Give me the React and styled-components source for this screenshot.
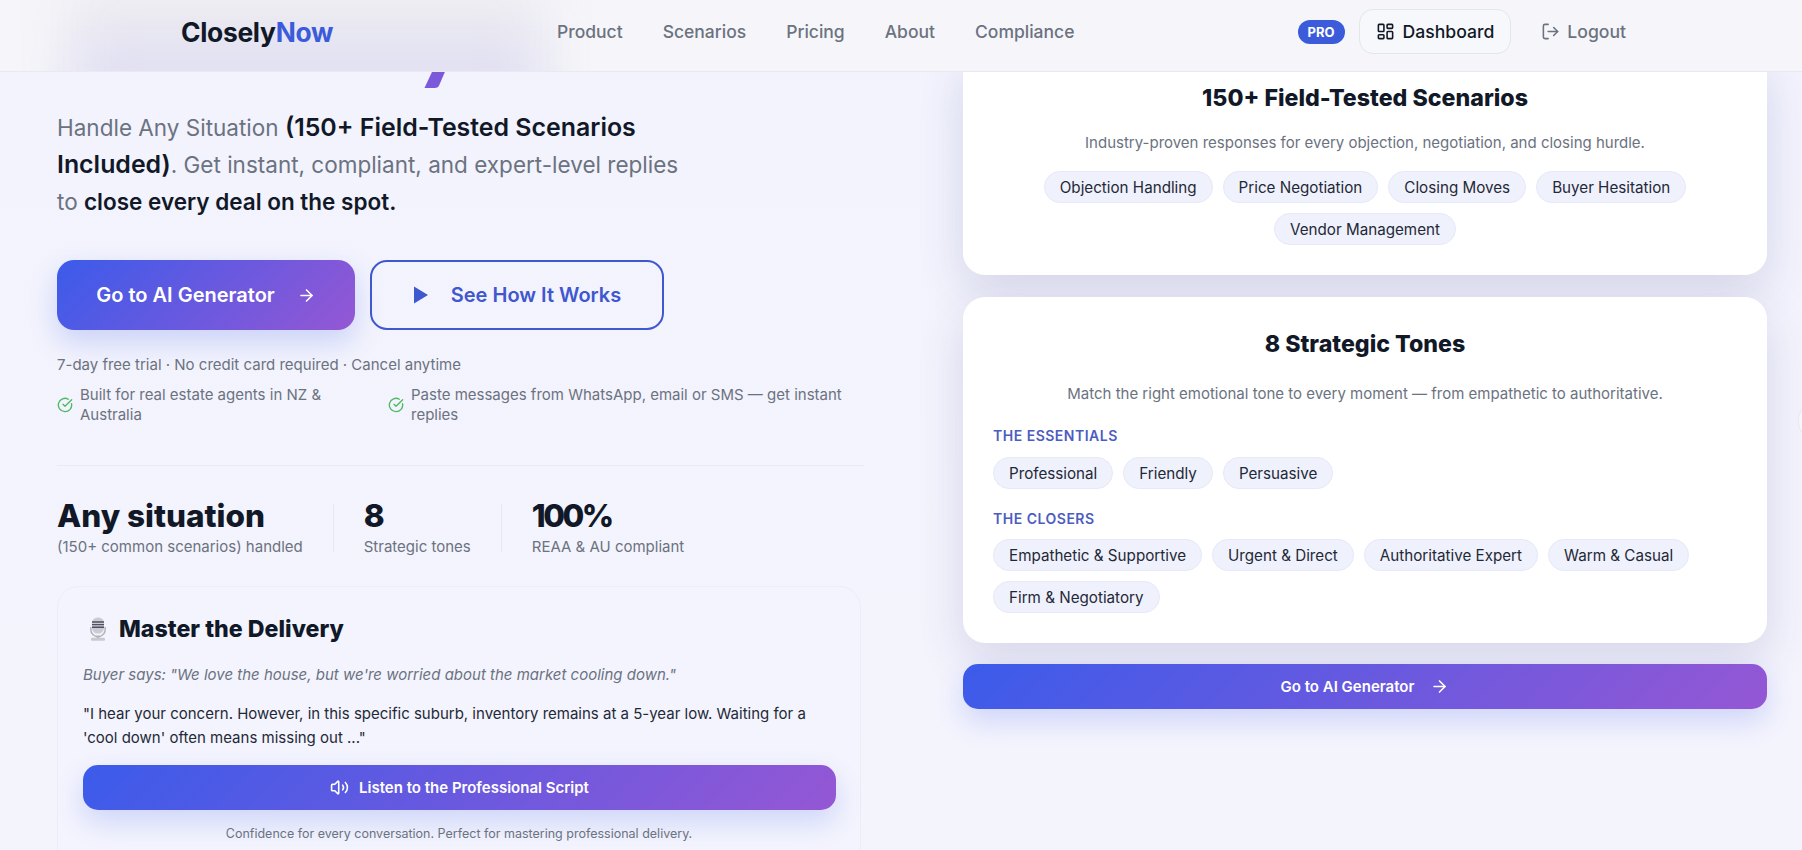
import React from 'react';
import styled, { createGlobalStyle } from 'styled-components';
import { ArrowRight, LayoutDashboard, LogOut, Volume2, CircleCheckBig } from 'lucide-react';

const GlobalStyle = createGlobalStyle`
  html, body {
    margin: 0;
    height: 850px;
    overflow: hidden;
    background: #f3f4fd;
    font-family: Inter, "Liberation Sans", sans-serif;
    color: #111827;
  }
  * { box-sizing: border-box; }
`;

const gradient = 'linear-gradient(135deg, #3b5bea 0%, #9557d4 100%)';
const headingFont = 'Inter, "Noto Sans", sans-serif';

const Page = styled.div`
  position: relative;
  width: 1802px;
  height: 850px;
  overflow: hidden;
  background: linear-gradient(180deg, #f2f3fd 0%, #f4f4fd 100%);
`;

const Nav = styled.header`
  position: absolute;
  top: 0;
  left: 0;
  right: 0;
  z-index: 10;
  isolation: isolate;
  overflow: hidden;
  height: 72px;
  display: flex;
  align-items: center;
  padding: 0 176px 8px 181px;
  background: #f6f6fa;
  border-bottom: 1px solid #e8e9f1;
`;

// the page heading smeared behind the frosted bar
const NavGlow = styled.div`
  position: absolute;
  z-index: -1;
  left: 66px;
  top: -30px;
  width: 480px;
  height: 160px;
  background: linear-gradient(180deg, #eeeef1 20%, #e2e0f2 55%);
  filter: blur(26px);
`;

const Logo = styled.div`
  font-size: 26.4px;
  font-weight: 700;
  letter-spacing: -0.3px;
  color: #111827;
  width: 376px;
  & span { color: #3b5bdb; }
`;

const NavLinks = styled.nav`
  display: flex;
  gap: 40px;
  flex: 1;
`;

const NavLink = styled.a`
  font-size: 17.5px;
  font-weight: 500;
  color: #6b7280;
`;

const NavRight = styled.div`
  display: flex;
  align-items: center;
`;

const ProBadge = styled.span`
  background: #3b5bdb;
  color: #fff;
  font-size: 13px;
  font-weight: 700;
  padding: 4px 10px;
  border-radius: 999px;
  line-height: 16px;
`;

const DashButton = styled.button`
  display: flex;
  align-items: center;
  gap: 8px;
  height: 45px;
  margin-left: 14px;
  padding: 0 16px;
  border: 1px solid #e4e6ee;
  border-radius: 14px;
  background: #f7f8fb;
  font: 500 17.6px Inter, sans-serif;
  color: #111827;
`;

const LogoutLink = styled.a`
  display: flex;
  align-items: center;
  gap: 7px;
  margin-left: 30px;
  font-size: 17.6px;
  font-weight: 500;
  color: #6b7280;
`;

const Layout = styled.main`
  display: grid;
  grid-template-columns: 807px 804px;
  column-gap: 99px;
  padding-left: 57px;
  margin-top: -54px;
`;

const HeroColumn = styled.section`
  display: flex;
  flex-direction: column;
`;

const HeroTitle = styled.h1`
  margin: 0 0 21px;
  height: 142px;
  padding-top: 31px;
  overflow: hidden;
  font-family: Lato, ${headingFont};
  font-size: 100px;
  line-height: 110px;
  font-weight: 900;
  text-indent: 16px;
  white-space: nowrap;
  background: linear-gradient(90deg, #3b5bea, #8f58d6);
  -webkit-background-clip: text;
  background-clip: text;
  color: transparent;
  width: 494px;
`;

const Lead = styled.p`
  margin: 0 0 40px;
  max-width: 640px;
  font-size: 22.5px;
  line-height: 37px;
  color: #6b7280;
  & strong { color: #111827; font-weight: 600; }
  & strong.big { font-size: 24.9px; }
`;

const HeroActions = styled.div`
  display: flex;
  gap: 15px;
`;

const PrimaryButton = styled.button`
  display: flex;
  align-items: center;
  justify-content: center;
  gap: 22px;
  width: 298px;
  height: 70px;
  border: 0;
  border-radius: 17px;
  background: ${gradient};
  color: #fff;
  font: 600 20px Inter, sans-serif;
  box-shadow: 0 12px 28px rgba(59, 91, 234, 0.22);
`;

const SecondaryButton = styled.button`
  display: flex;
  align-items: center;
  justify-content: center;
  gap: 22px;
  width: 294px;
  height: 70px;
  border: 2px solid #3f57cf;
  border-radius: 17px;
  background: transparent;
  color: #3f57cf;
  font: 600 20px Inter, sans-serif;
`;

const TrialNote = styled.p`
  margin: 25px 0 0;
  font-size: 15px;
  line-height: 20px;
  color: #6b7280;
`;

const Checks = styled.div`
  display: grid;
  grid-template-columns: 331px 1fr;
  margin-top: 10px;
`;

const CheckItem = styled.div`
  display: flex;
  align-items: center;
  gap: 7px;
  font-size: 15px;
  line-height: 20px;
  color: #6b7280;
  max-width: ${(p) => p.$max}px;
  & svg { flex: none; color: #4cb963; }
`;

const Stats = styled.div`
  display: flex;
  margin-top: 40px;
  padding-top: 38px;
  border-top: 1px solid #e9eaf3;
`;

const Stat = styled.div`
  padding-right: 30px;
  margin-right: 30px;
  border-right: ${(p) => (p.$last ? '0' : '1px solid #e6e7f0')};
  height: 48px;
`;

const StatValue = styled.div`
  font-family: ${headingFont};
  font-size: 31.5px;
  line-height: 40px;
  font-weight: 800;
  margin-top: -8px;
  letter-spacing: ${(p) => (p.$tight ? '-2.5px' : '0')};
`;

const StatLabel = styled.div`
  font-size: 15px;
  line-height: 20px;
  color: #6b7280;
  margin-top: 1px;
`;

const DemoCard = styled.section`
  margin-top: 34px;
  width: 804px;
  height: 320px;
  padding: 27px 25px;
  border: 1px solid #ecedf6;
  border-radius: 22px;
  background: #f3f4fd;
`;

const DemoTitle = styled.h3`
  display: flex;
  align-items: center;
  gap: 10px;
  margin: 0 0 0 4px;
  font-family: ${headingFont};
  font-size: 23.2px;
  line-height: 30px;
  font-weight: 800;
`;

const BuyerLine = styled.p`
  margin: 19px 0 0;
  font-size: 15px;
  font-style: italic;
  line-height: 24px;
  color: #6b7280;
`;

const ScriptLine = styled.p`
  margin: 15px 0 0;
  font-size: 15px;
  line-height: 24px;
  color: #1f2937;
`;

const WideButton = styled.button`
  display: flex;
  align-items: center;
  justify-content: center;
  gap: ${(p) => p.$gap}px;
  width: ${(p) => p.$width}px;
  height: 45px;
  border: 0;
  border-radius: 15px;
  background: ${gradient};
  color: #fff;
  font: 600 15px Inter, sans-serif;
  box-shadow: 0 12px 28px rgba(59, 91, 234, 0.2);
`;

const DemoButton = styled(WideButton)`
  margin-top: 15px;
`;

const Caption = styled.p`
  margin: 16px 0 0;
  text-align: center;
  font-size: 12.5px;
  line-height: 16px;
  color: #6b7280;
`;

const SideColumn = styled.section`
  display: flex;
  flex-direction: column;
  gap: 21px;
  margin-top: 105px;
  & > article + article { margin-top: 1px; }
`;

const Card = styled.article`
  padding: 30px;
  background: #fff;
  border-radius: 22px;
  box-shadow: 0 18px 46px rgba(60, 60, 130, 0.16);
`;

const CardTitle = styled.h2`
  margin: 0;
  text-align: center;
  font-family: ${headingFont};
  font-size: 23.2px;
  line-height: 34px;
  font-weight: 800;
`;

const CardText = styled.p`
  margin: ${(p) => p.$top}px 0 0;
  text-align: center;
  font-size: 15px;
  line-height: 22px;
  color: #6b7280;
`;

const ChipRow = styled.div`
  display: flex;
  flex-wrap: wrap;
  gap: 10px;
  justify-content: ${(p) => (p.$center ? 'center' : 'flex-start')};
  margin-top: ${(p) => p.$top}px;
`;

const Chip = styled.span`
  height: 32px;
  padding: 0 15px;
  display: flex;
  align-items: center;
  border: 1px solid #e6e9f8;
  border-radius: 999px;
  background: #eff1fc;
  font-size: 15.2px;
  color: #1f2937;
`;

const GroupLabel = styled.div`
  margin-top: ${(p) => p.$top}px;
  font-size: 14px;
  line-height: 18px;
  font-weight: 600;
  letter-spacing: 0.5px;
  color: #4c5dc0;
`;

const EdgeButton = styled.div`
  position: absolute;
  right: -26px;
  top: 403px;
  width: 30px;
  height: 36px;
  border-radius: 50%;
  background: #f7f7fb;
  border: 1px solid #e8e8f0;
`;

function PlayIcon() {
  return (
    <svg width="16" height="18" viewBox="0 0 16 18">
      <path d="M1 0.5 L15 9 L1 17.5 Z" fill="currentColor" />
    </svg>
  );
}

function MicEmoji() {
  return (
    <svg width="22" height="24" viewBox="0 0 22 24">
      <rect x="5" y="0.5" width="12" height="16" rx="5.5" fill="#cbcbd4" />
      <path d="M5 5h12M5 7.6h12M5 10.2h12" stroke="#4f4f66" strokeWidth="1.4" />
      <path d="M3.8 10v2.5a7.2 7.2 0 0 0 14.4 0v-2.5" fill="none" stroke="#b4b4bd" strokeWidth="1.5" />
      <rect x="9.5" y="18.5" width="3" height="3" fill="#b4b4bd" />
      <rect x="4" y="20.8" width="14" height="3" rx="1" fill="#c9c9d2" />
    </svg>
  );
}

const scenarios = ['Objection Handling', 'Price Negotiation', 'Closing Moves', 'Buyer Hesitation', 'Vendor Management'];
const essentials = ['Professional', 'Friendly', 'Persuasive'];
const closers = ['Empathetic & Supportive', 'Urgent & Direct', 'Authoritative Expert', 'Warm & Casual', 'Firm & Negotiatory'];

export default function App() {
  return (
    <Page>
      <GlobalStyle />
      <Nav>
        <NavGlow />
        <Logo>Closely<span>Now</span></Logo>
        <NavLinks>
          {['Product', 'Scenarios', 'Pricing', 'About', 'Compliance'].map((l) => (
            <NavLink key={l}>{l}</NavLink>
          ))}
        </NavLinks>
        <NavRight>
          <ProBadge>PRO</ProBadge>
          <DashButton><LayoutDashboard size={19} />Dashboard</DashButton>
          <LogoutLink><LogOut size={19} />Logout</LogoutLink>
        </NavRight>
      </Nav>
      <Layout>
        <HeroColumn>
          <HeroTitle>So Easily</HeroTitle>
          <Lead>
            Handle Any Situation <strong className="big">(150+ Field-Tested Scenarios Included)</strong>. Get instant, compliant, and expert-level replies to <strong>close every deal on the spot.</strong>
          </Lead>
          <HeroActions>
            <PrimaryButton>Go to AI Generator <ArrowRight size={19} /></PrimaryButton>
            <SecondaryButton><PlayIcon />See How It Works</SecondaryButton>
          </HeroActions>
          <TrialNote>7-day free trial · No credit card required · Cancel anytime</TrialNote>
          <Checks>
            <CheckItem $max={300}><CircleCheckBig size={16} />Built for real estate agents in NZ & Australia</CheckItem>
            <CheckItem $max={470}><CircleCheckBig size={16} />Paste messages from WhatsApp, email or SMS — get instant replies</CheckItem>
          </Checks>
          <Stats>
            <Stat>
              <StatValue>Any situation</StatValue>
              <StatLabel>(150+ common scenarios) handled</StatLabel>
            </Stat>
            <Stat>
              <StatValue>8</StatValue>
              <StatLabel>Strategic tones</StatLabel>
            </Stat>
            <Stat $last>
              <StatValue $tight>100%</StatValue>
              <StatLabel>REAA & AU compliant</StatLabel>
            </Stat>
          </Stats>
          <DemoCard>
            <DemoTitle><MicEmoji />Master the Delivery</DemoTitle>
            <BuyerLine>Buyer says: "We love the house, but we're worried about the market cooling down."</BuyerLine>
            <ScriptLine>"I hear your concern. However, in this specific suburb, inventory remains at a 5-year low. Waiting for a 'cool down' often means missing out ..."</ScriptLine>
            <DemoButton $width={753} $gap={10}><Volume2 size={19} />Listen to the Professional Script</DemoButton>
            <Caption>Confidence for every conversation. Perfect for mastering professional delivery.</Caption>
          </DemoCard>
        </HeroColumn>
        <SideColumn>
          <Card>
            <CardTitle>150+ Field-Tested Scenarios</CardTitle>
            <CardText $top={17}>Industry-proven responses for every objection, negotiation, and closing hurdle.</CardText>
            <ChipRow $center $top={17}>
              {scenarios.map((s) => <Chip key={s}>{s}</Chip>)}
            </ChipRow>
          </Card>
          <Card>
            <CardTitle>8 Strategic Tones</CardTitle>
            <CardText $top={22}>Match the right emotional tone to every moment — from empathetic to authoritative.</CardText>
            <GroupLabel $top={22}>THE ESSENTIALS</GroupLabel>
            <ChipRow $top={12}>
              {essentials.map((s) => <Chip key={s}>{s}</Chip>)}
            </ChipRow>
            <GroupLabel $top={21}>THE CLOSERS</GroupLabel>
            <ChipRow $top={11}>
              {closers.map((s) => <Chip key={s}>{s}</Chip>)}
            </ChipRow>
          </Card>
          <WideButton $width={804} $gap={16}>Go to AI Generator <ArrowRight size={19} /></WideButton>
        </SideColumn>
      </Layout>
      <EdgeButton />
    </Page>
  );
}
